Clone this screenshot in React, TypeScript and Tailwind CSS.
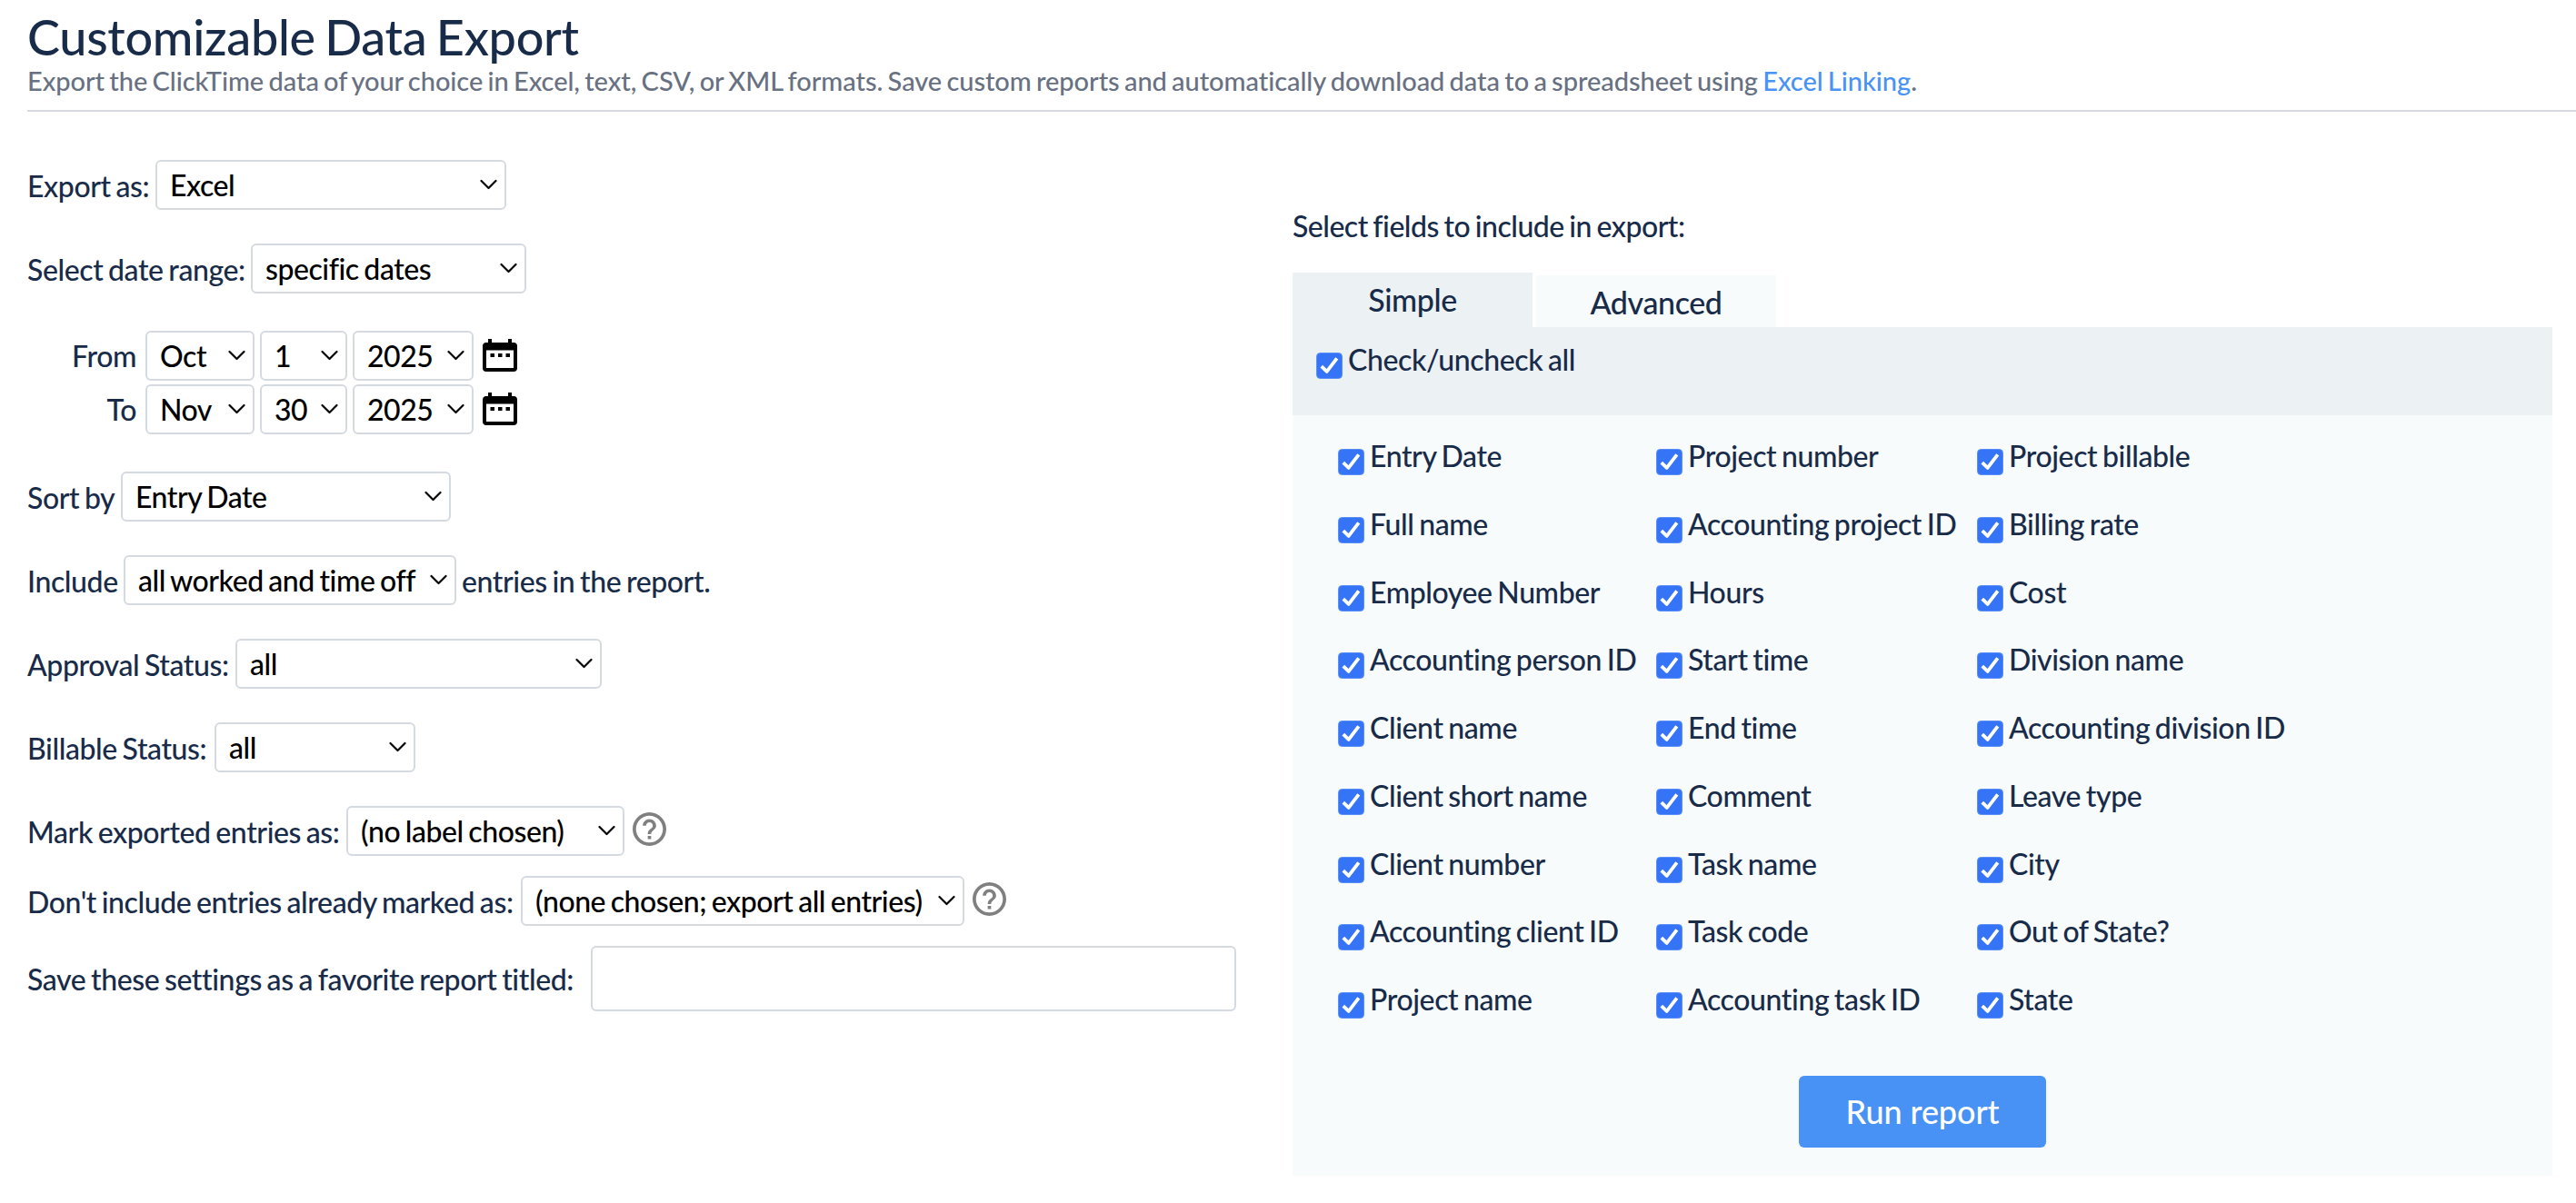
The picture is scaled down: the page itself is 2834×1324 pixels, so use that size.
import { useState } from "react";
import type { ReactNode } from "react";

const fields = [
  ["Entry Date", "Project number", "Project billable"],
  ["Full name", "Accounting project ID", "Billing rate"],
  ["Employee Number", "Hours", "Cost"],
  ["Accounting person ID", "Start time", "Division name"],
  ["Client name", "End time", "Accounting division ID"],
  ["Client short name", "Comment", "Leave type"],
  ["Client number", "Task name", "City"],
  ["Accounting client ID", "Task code", "Out of State?"],
  ["Project name", "Accounting task ID", "State"],
];

const allFields = fields.flat();

function Select({ value, className }: { value: string; className: string }) {
  return (
    <div className={`relative h-[55px] shrink-0 ${className}`}>
      <select
        defaultValue={value}
        className="block h-full w-full appearance-none rounded-[6px] border-2 border-[#d5dae0] bg-white pl-[14px] text-[32px] leading-[51px] tracking-[-0.45px] text-black [word-spacing:-2px]"
      >
        <option>{value}</option>
      </select>
      <svg
        viewBox="0 0 20 12"
        className="pointer-events-none absolute top-[21px] right-[9px] h-3 w-5"
        fill="none"
        stroke="black"
        strokeWidth="2.2"
        strokeLinecap="round"
        strokeLinejoin="round"
      >
        <path d="M1.500 2l8 8 8-8" />
      </svg>
    </div>
  );
}

function Row({ label, className = "", children }: { label: string; className?: string; children: ReactNode }) {
  return (
    <div className={`flex items-center justify-between ${className}`}>
      <label className="pt-[2px] whitespace-nowrap">{label}</label>
      {children}
    </div>
  );
}

function CalendarIcon() {
  return (
    <svg viewBox="0 0 40 36" className="mb-[2px] ml-[9px] h-9 w-10" fill="black">
      <path d="M7 0h4v4h18V0h4v4h2a4 4 0 0 1 4 4v24a4 4 0 0 1-4 4H5a4 4 0 0 1-4-4V8a4 4 0 0 1 4-4h2zM5 12.500v19.500h30v-19.500z" fillRule="evenodd" />
      <path d="M9.500 16h4.500v4h-4.500zM18 16h4.500v4h-4.500zM26.500 16h4.500v4h-4.500z" />
    </svg>
  );
}

function HelpIcon() {
  return (
    <svg viewBox="2 2 20 20" className="mb-[5px] h-[37px] w-[37px]" fill="#808080">
      <path d="M11 18h2v-2h-2v2zm1-16C6.480 2 2 6.480 2 12s4.480 10 10 10 10-4.480 10-10S17.520 2 12 2zm0 18c-4.410 0-8-3.590-8-8s3.590-8 8-8 8 3.590 8 8-3.590 8-8 8zm0-14c-2.210 0-4 1.790-4 4h2c0-1.100.9-2 2-2s2 .9 2 2c0 2-3 1.750-3 5h2c0-2.250 3-2.500 3-5 0-2.210-1.790-4-4-4z" />
    </svg>
  );
}

function DateRow({ label, month, day, year }: { label: string; month: string; day: string; year: string }) {
  return (
    <div className="flex items-center">
      <label className="w-[120px] text-right">{label}</label>
      <Select value={month} className="ml-[10px] w-[120px]" />
      <Select value={day} className="ml-[6px] w-[96px]" />
      <Select value={year} className="ml-[6px] w-[133px]" />
      <CalendarIcon />
    </div>
  );
}

function Checkbox({ label, checked, onChange }: { label: string; checked: boolean; onChange: () => void }) {
  return (
    <label className="flex gap-[6px] leading-[40px] whitespace-nowrap">
      <input type="checkbox" className="sr-only" checked={checked} onChange={onChange} />
      <svg viewBox="0 0 29 29" className="mt-3 h-[29px] w-[29px] shrink-0">
        <rect x="0.500" y="0.500" width="28" height="28" rx="4" fill={checked ? "#3574f6" : "#fff"} stroke={checked ? "#5a8ff8" : "#b5b5b5"} />
        {checked && (
          <path d="M5.800 15.200l5.900 5.700L22.800 6.300" fill="none" stroke="#fff" strokeWidth="3.800" strokeLinejoin="round" />
        )}
      </svg>
      {label}
    </label>
  );
}

export default function App() {
  const [selected, setSelected] = useState<string[]>(allFields);
  const [title, setTitle] = useState("");

  const allChecked = selected.length === allFields.length;

  const toggle = (name: string) => {
    setSelected((prev) =>
      prev.includes(name) ? prev.filter((n) => n !== name) : [...prev, name]
    );
  };

  return (
    <div className="h-[1324px] w-[2834px] overflow-hidden bg-white pl-[30px] font-[Lato,sans-serif] text-[32px] leading-[38px] font-medium tracking-[-0.4px] text-[#182b49] [word-spacing:-2px]">
      <header className="h-[123px] border-b-2 border-[#d5d9e1] pt-[9px]">
        <h1 className="text-[54px] leading-[64px] tracking-[-0.3px] [word-spacing:-3px]">Customizable Data Export</h1>
        <p className="text-[29px] leading-[32px] tracking-[-0.045px] text-[#687182]">
          Export the ClickTime data of your choice in Excel, text, CSV, or XML formats. Save custom reports and
          automatically download data to a spreadsheet using <a className="text-[#4893f5]">Excel Linking</a>.
        </p>
      </header>

      <div className="flex">
        <form className="flex w-[1392px] flex-col items-start pt-[53px]">
          <Row label="Export as:" className="w-[527px]">
            <Select value="Excel" className="w-[386px]" />
          </Row>
          <Row label="Select date range:" className="mt-[37px] w-[549px]">
            <Select value="specific dates" className="w-[303px]" />
          </Row>

          <div className="my-[41px] flex flex-col gap-1">
            <DateRow label="From" month="Oct" day="1" year="2025" />
            <DateRow label="To" month="Nov" day="30" year="2025" />
          </div>

          <Row label="Sort by" className="w-[466px]">
            <Select value="Entry Date" className="w-[363px]" />
          </Row>
          <div className="mt-[37px] flex items-center">
            <Row label="Include" className="w-[472px]">
              <Select value="all worked and time off" className="w-[366px]" />
            </Row>
            <span className="ml-[6px] pt-[2px]">entries in the report.</span>
          </div>
          <Row label="Approval Status:" className="mt-[37px] w-[632px]">
            <Select value="all" className="w-[403px]" />
          </Row>
          <Row label="Billable Status:" className="mt-[37px] w-[427px]">
            <Select value="all" className="w-[221px]" />
          </Row>
          <div className="mt-[37px] flex items-center gap-[9px]">
            <Row label="Mark exported entries as:" className="w-[657px]">
              <Select value="(no label chosen)" className="w-[306px]" />
            </Row>
            <HelpIcon />
          </div>
          <div className="mt-[22px] flex items-center gap-[9px]">
            <Row label="Don't include entries already marked as:" className="w-[1031px]">
              <Select value="(none chosen; export all entries)" className="w-[488px]" />
            </Row>
            <HelpIcon />
          </div>
          <Row label="Save these settings as a favorite report titled:" className="mt-[22px] w-[1330px]">
            <input
              type="text"
              value={title}
              onChange={(e) => setTitle(e.target.value)}
              className="h-[72px] w-[710px] rounded-[6px] border-2 border-[#d5dae0] px-3"
            />
          </Row>
        </form>

        <section className="w-[1386px] pt-[107px]">
          <h2 className="tracking-[-0.5px]">Select fields to include in export:</h2>
          <div className="mt-8 flex items-end gap-1 text-[34px]">
            <button className="h-[60px] w-[264px] bg-[#ecf1f4]">Simple</button>
            <button className="h-[57px] w-[264px] bg-[#f7fbfc] pt-[2px]">Advanced</button>
          </div>
          <div className="h-[97px] bg-[#ecf1f4] pt-4 pl-[26px]">
            <Checkbox
              label="Check/uncheck all"
              checked={allChecked}
              onChange={() => setSelected(allChecked ? [] : allFields)}
            />
          </div>
          <div className="flex h-[837px] flex-col bg-[#f7fbfc] pt-[25px]">
            <div className="grid auto-rows-[74.75px] grid-cols-[350px_353px_1fr] pl-[50px]">
              {allFields.map((name) => (
                <Checkbox key={name} label={name} checked={selected.includes(name)} onChange={() => toggle(name)} />
              ))}
            </div>
            <button className="mt-[29px] h-[79px] w-[272px] self-center rounded-[6px] bg-[#4892f5] text-[36px] tracking-[-0.1px] text-white">
              Run report
            </button>
          </div>
        </section>
      </div>
    </div>
  );
}
